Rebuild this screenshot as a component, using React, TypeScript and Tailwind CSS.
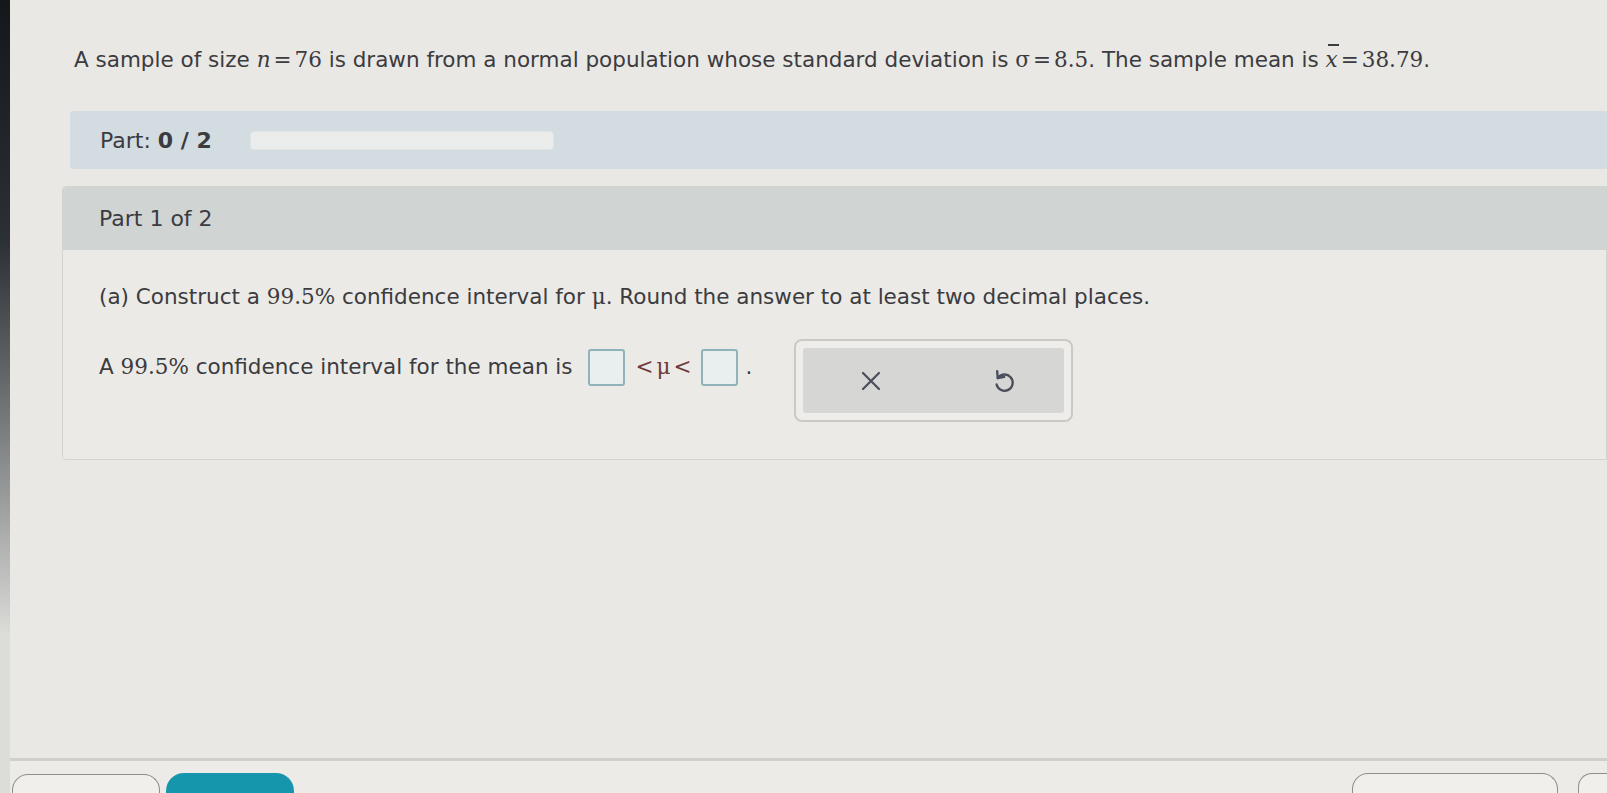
import React from 'react'

const sans = "font-['DejaVu_Sans',sans-serif]"
const serif = "font-['DejaVu_Serif','Liberation_Serif',serif]"

function Blank() {
  return <span className="inline-block w-[37px] h-[37px] align-middle border-2 border-[#8fb3b8] rounded-[3px] bg-[#e9efee]" />
}

function UndoIcon() {
  return (
    <svg width="26" height="28" viewBox="0 0 22 24" fill="none" stroke="#4a4d5c" strokeWidth="2" strokeLinecap="round" strokeLinejoin="round">
      <path d="M6.5 9.5 A7 7 0 1 1 5.5 15" />
      <path d="M6 3.5 L6.5 9.5 L12 8.5" />
    </svg>
  )
}

function Eq({ children }: { children: React.ReactNode }) {
  return <span className={`${serif} mx-[3px]`}>{children}</span>
}

export default function App() {
  return (
    <div className={`w-[1607px] h-[793px] overflow-hidden flex bg-[#e9e8e4] text-[#3b3b40] ${sans}`}>
      <div className="w-[10px] shrink-0 bg-linear-to-b from-[#14181b] via-[#2b3034] via-30% to-[#dcdcd9] to-80%" />
      <div className="flex-1 flex flex-col min-w-0">
        <div className="flex-1 pl-[52px]">
          <p className="pt-[46px] pl-[12px] text-[21.5px] leading-[28px] whitespace-nowrap">
            A sample of size <span className={`${serif} italic`}>n</span>
            <Eq>=</Eq>
            <span className={serif}>76</span> is drawn from a normal population whose standard deviation is{' '}
            <span className={serif}>σ</span>
            <Eq>=</Eq>
            <span className={serif}>8.5</span>. The sample mean is{' '}
            <span className={`${serif} italic relative`}>
              x<span className="absolute left-[2px] top-[-3px] w-[11px] h-[2px] bg-[#3b3b40]" />
            </span>
            <Eq>=</Eq>
            <span className={serif}>38.79</span>.
          </p>

          <div className="mt-[37px] ml-[8px] h-[58px] bg-[#d2dce1] rounded-l-[3px] flex items-center pl-[30px]">
            <span className="text-[22px]">
              Part: <span className="font-bold">0&nbsp;/&nbsp;2</span>
            </span>
            <div className="ml-[38px] w-[304px] h-[19px] rounded-[4px] bg-[#eaedec] border border-[#dfe4e5]" />
          </div>

          <div className="mt-[17px] border border-[#d3d3d0] rounded-l-[4px] overflow-hidden">
            <div className="h-[63px] bg-[#d0d5d4] flex items-center pl-[36px] text-[22px]">Part 1 of 2</div>
            <div className="h-[209px] bg-[#ebeae6] pl-[36px] pt-[33px] text-[21.5px]">
              <p className="whitespace-nowrap leading-[28px]">
                (a) Construct a <span className={serif}>99.5%</span> confidence interval for{' '}
                <span className={serif}>μ</span>. Round the answer to at least two decimal places.
              </p>
              <div className="mt-[28px] flex items-start">
                <p className="whitespace-nowrap flex items-center mt-[10px]">
                  <span>
                    A <span className={serif}>99.5%</span> confidence interval for the mean is
                  </span>
                  <span className="ml-[15px]">
                    <Blank />
                  </span>
                  <span className={`${serif} ml-[11px] text-[#6e3a3c]`}>
                    &lt;<span className="mx-[3px]">μ</span>&lt;
                  </span>
                  <span className="ml-[9px]">
                    <Blank />
                  </span>
                  <span className="ml-[8px]">.</span>
                </p>
                <div className="ml-[42px] w-[279px] h-[83px] rounded-[8px] border-2 border-[#c9c9c7] bg-[#eeedea] p-[7px]">
                  <div className="h-full rounded-[3px] bg-[#d6d6d4] flex items-center">
                    <span className="w-[132px] flex justify-center pl-[4px]">
                      <svg width="22" height="22" viewBox="0 0 22 22" stroke="#4a4d5c" strokeWidth="2.2" strokeLinecap="round">
                        <path d="M3 3 L19 19 M19 3 L3 19" />
                      </svg>
                    </span>
                    <span className="w-[132px] flex justify-center pl-[8px]">
                      <UndoIcon />
                    </span>
                  </div>
                </div>
              </div>
            </div>
          </div>
        </div>

        <div className="h-[35px] border-t-[3px] border-[#cfcfcc] bg-[#ecebe7] flex items-end pl-[2px]">
          <div className="w-[148px] h-[19px] rounded-t-[16px] border border-b-0 border-[#8e8e8c] bg-[#f0efeb]" />
          <div className="ml-[6px] w-[128px] h-[20px] rounded-t-[18px] bg-[#1596ad]" />
          <div className="flex-1" />
          <div className="w-[206px] h-[20px] rounded-t-[16px] border border-b-0 border-[#8e8e8c] bg-[#f0efeb]" />
          <div className="ml-[20px] w-[29px] h-[20px] rounded-tl-[14px] border border-b-0 border-r-0 border-[#8e8e8c] bg-[#f0efeb]" />
        </div>
      </div>
    </div>
  )
}
